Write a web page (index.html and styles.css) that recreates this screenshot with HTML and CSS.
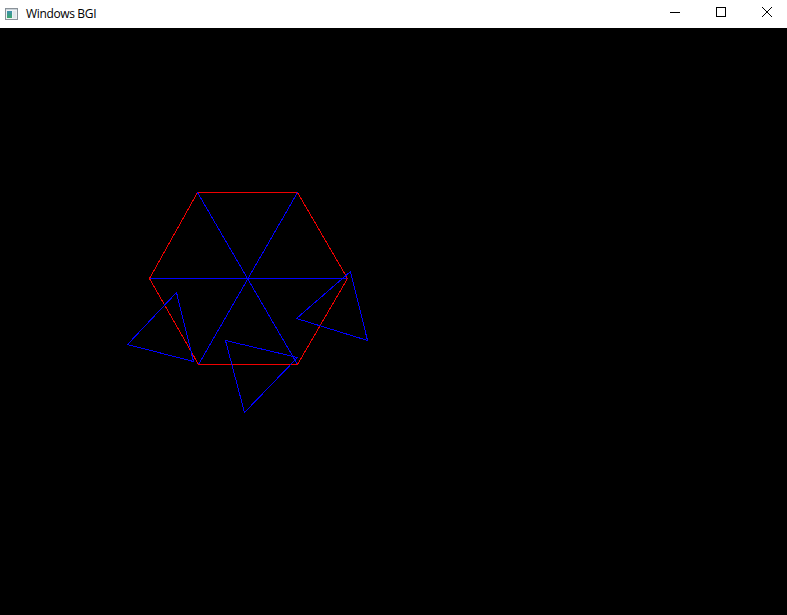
FILE: index.html
```html
<!DOCTYPE html>
<html>
<head>
<meta charset="utf-8">
<title>Windows BGI</title>
<link rel="stylesheet" href="styles.css">
</head>
<body>
<div class="window">
  <div class="titlebar">
    <svg class="app-icon" width="13" height="12" viewBox="0 0 13 12">
      <defs>
        <linearGradient id="pane" x1="0" y1="0" x2="0" y2="1">
          <stop offset="0" stop-color="#3f8fb0"/>
          <stop offset="1" stop-color="#3aa66a"/>
        </linearGradient>
      </defs>
      <rect x="0.5" y="0.5" width="12" height="11" fill="#eef1f3" stroke="#8a9299"/>
      <rect x="1" y="1" width="11" height="1" fill="#c9d2d8"/>
      <rect x="2" y="3" width="5" height="7" fill="url(#pane)"/>
      <rect x="8" y="3" width="3" height="7" fill="#dfe6ea"/>
    </svg>
    <span class="title">Windows BGI</span>
    <div class="controls">
      <div class="ctl">
        <svg width="10" height="10" viewBox="0 0 10 10"><line x1="0" y1="5.5" x2="10" y2="5.5" stroke="#000" stroke-width="1" shape-rendering="crispEdges"/></svg>
      </div>
      <div class="ctl">
        <svg width="10" height="10" viewBox="0 0 10 10"><rect x="0.5" y="0.5" width="9" height="9" fill="none" stroke="#000" stroke-width="1" shape-rendering="crispEdges"/></svg>
      </div>
      <div class="ctl">
        <svg width="10" height="10" viewBox="0 0 10 10"><path d="M0 0 L10 10 M10 0 L0 10" stroke="#000" stroke-width="1"/></svg>
      </div>
    </div>
  </div>
  <div class="canvas">
    <svg class="drawing" width="787" height="587" viewBox="0 28 787 587">
      <g fill="none" stroke-width="1" shape-rendering="crispEdges" transform="translate(0.5 0.5)">
        <polygon stroke="#f00000" points="197,192 297,192 347,278 297,364 198,364 149,278"/>
        <line stroke="#0000ff" x1="149" y1="278" x2="346" y2="278"/>
        <line stroke="#0000ff" x1="197" y1="192" x2="297" y2="364"/>
        <line stroke="#0000ff" x1="297" y1="192" x2="198" y2="364"/>
        <polygon stroke="#0000ff" points="176,292 127,344 193,361"/>
        <polygon stroke="#0000ff" points="225,340 297,357 244,412"/>
        <polygon stroke="#0000ff" points="350,271 296,318 367,340"/>
      </g>
    </svg>
  </div>
</div>
</body>
</html>
```

FILE: styles.css
```css
html, body {
  margin: 0;
  padding: 0;
  background: #000;
}
.window {
  width: 787px;
  height: 615px;
  display: flex;
  flex-direction: column;
  overflow: hidden;
}
.titlebar {
  height: 28px;
  flex: none;
  background: #fff;
  display: flex;
  align-items: center;
  font-family: "Open Sans", "Noto Sans", "Liberation Sans", sans-serif;
  font-size: 12px;
  color: #000;
}
.app-icon {
  margin-left: 5px;
  display: block;
}
.title {
  margin-left: 8px;
  margin-top: -1px;
  letter-spacing: -0.35px;
}
.controls {
  margin-left: auto;
  display: flex;
  height: 28px;
}
.ctl {
  width: 46px;
  height: 28px;
  display: flex;
  align-items: center;
  justify-content: center;
}
.ctl svg {
  display: block;
  margin-top: -4px;
  margin-left: 5px;
}
.canvas {
  flex: 1;
  background: #000;
}
.drawing {
  display: block;
}
```
